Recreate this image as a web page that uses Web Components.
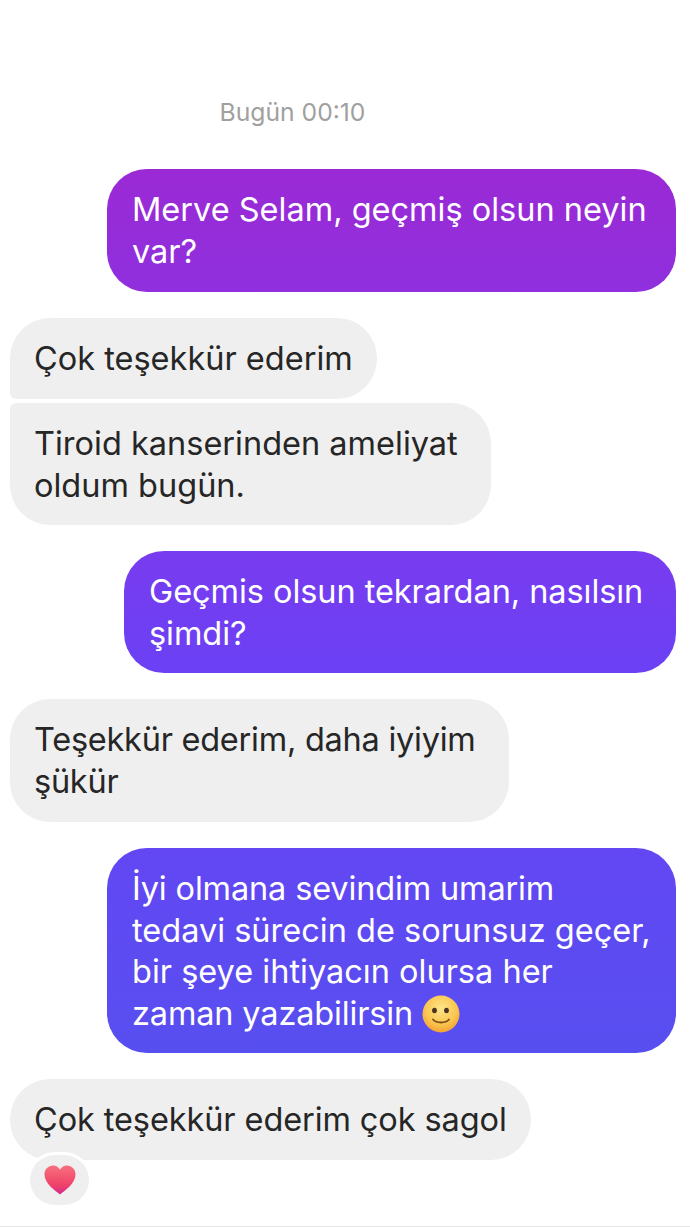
<!DOCTYPE html>
<html lang="tr">
  <head>
    <meta charset="UTF-8" />
    <title>Sohbet</title>
    <style>
      html, body { margin: 0; padding: 0; background: #fff; }
      body { width: 690px; height: 1227px; overflow: hidden; font-family: Inter, "Noto Sans", sans-serif; }
      .tight { letter-spacing: -0.15px; }
    </style>
  </head>
  <body>
    <chat-thread>
      <chat-time>Bugün 00:10</chat-time>
      <chat-bubble mine style="--w: 569px; margin-top: 41px">Merve Selam, geçmiş olsun neyin<br />var?</chat-bubble>
      <chat-bubble style="--w: 367px; --bl: 6px; margin-top: 26px">Çok teşekkür ederim</chat-bubble>
      <chat-bubble style="--w: 481px; --tl: 6px; --pb: 18px; margin-top: 4px">Tiroid kanserinden ameliyat<br />oldum bugün.</chat-bubble>
      <chat-bubble mine style="--w: 552px; --pb: 18px; --ls: -0.06px; margin-top: 26px">Geçmis olsun tekrardan, nasılsın<br />şimdi?</chat-bubble>
      <chat-bubble style="--w: 499px; --ls: -0.25px; margin-top: 26px">Teşekkür ederim, daha iyiyim<br />şükür</chat-bubble>
      <chat-bubble mine style="--w: 569px; --lh: 41.5px; margin-top: 26px"><span class="tight">İyi olmana sevindim umarim</span><br />tedavi sürecin de sorunsuz geçer,<br />bir şeye ihtiyacın olursa her<br /><span class="tight">zaman yazabilirsin</span> <smile-icon></smile-icon></chat-bubble>
      <chat-bubble style="--w: 521px; --ls: -0.1px; margin-top: 26px">Çok teşekkür ederim çok sagol<heart-reaction slot="reaction"></heart-reaction></chat-bubble>
    </chat-thread>

    <script>
      class ChatThread extends HTMLElement {
        constructor() {
          super();
          this.attachShadow({ mode: "open" }).innerHTML = `
            <style>
              :host { display: flex; flex-direction: column; box-sizing: border-box; height: 1227px; padding: 96px 14px 0 10px; border-bottom: 1px solid #e6e6e6; }
            </style>
            <slot></slot>`;
        }
      }

      class ChatTime extends HTMLElement {
        constructor() {
          super();
          this.attachShadow({ mode: "open" }).innerHTML = `
            <style>
              :host { display: block; padding-right: 101px; text-align: center; font-size: 24.7px; line-height: 32px; color: #a0a0a0; }
            </style>
            <slot></slot>`;
        }
      }

      class ChatBubble extends HTMLElement {
        constructor() {
          super();
          this.attachShadow({ mode: "open" }).innerHTML = `
            <style>
              :host { display: block; position: relative; box-sizing: border-box; width: var(--w); padding: 20px 10px var(--pb, 19px) 24px; font-size: 32.5px; line-height: var(--lh, 42px); letter-spacing: var(--ls, 0); white-space: nowrap; color: #262626; background: #efefef; border-radius: var(--tl, 40px) 40px 40px var(--bl, 40px); }
              :host([mine]) { align-self: flex-end; padding-left: 25px; color: #fff; background: linear-gradient(180deg, #a328ce 0px, #9a2ad5 170px, #7a3bef 540px, #6a41f5 680px, #6247f3 850px, #574ff0 1060px) fixed; }
            </style>
            <slot></slot><slot name="reaction"></slot>`;
        }
      }

      class SmileIcon extends HTMLElement {
        constructor() {
          super();
          this.attachShadow({ mode: "open" }).innerHTML = `
            <style>
              :host { display: inline-block; width: 38px; height: 38px; line-height: 0; vertical-align: -8px; }
              svg { display: block; }
            </style>
            <svg width="38" height="38" viewBox="0 0 38 38">
              <defs>
                <radialGradient id="face" cx="50%" cy="35%" r="70%">
                  <stop offset="0" stop-color="#fde58a" />
                  <stop offset="0.6" stop-color="#fbc64f" />
                  <stop offset="1" stop-color="#f09a2e" />
                </radialGradient>
              </defs>
              <circle cx="19" cy="19" r="18.5" fill="url(#face)" />
              <ellipse cx="12.5" cy="15.5" rx="2.4" ry="2.8" fill="#4a3320" />
              <ellipse cx="24.5" cy="15.5" rx="2.4" ry="2.8" fill="#4a3320" />
              <path d="M11 24.5 C14.5 28.5 23.5 28.5 27 24.5" fill="none" stroke="#7a4a1c" stroke-width="1.8" stroke-linecap="round" />
            </svg>`;
        }
      }

      class HeartReaction extends HTMLElement {
        constructor() {
          super();
          this.attachShadow({ mode: "open" }).innerHTML = `
            <style>
              :host { position: absolute; left: 20px; top: 76px; display: flex; align-items: center; justify-content: center; width: 59px; height: 50px; background: #efefef; border-radius: 25px; box-shadow: 0 0 0 3px #fff; }
              svg { display: block; }
            </style>
            <svg width="32" height="30" viewBox="0 0 32 30">
              <defs>
                <linearGradient id="heart" x1="0" y1="0" x2="0" y2="1">
                  <stop offset="0" stop-color="#f8707f" />
                  <stop offset="0.65" stop-color="#ef4468" />
                  <stop offset="1" stop-color="#d42a8e" />
                </linearGradient>
              </defs>
              <path d="M16 29.5 C11 25.5 0.5 18.5 0.5 9.5 C0.5 4 4.5 0.5 9 0.5 C12 0.5 14.6 2 16 4.8 C17.4 2 20 0.5 23 0.5 C27.5 0.5 31.5 4 31.5 9.5 C31.5 18.5 21 25.5 16 29.5 Z" fill="url(#heart)" />
            </svg>`;
        }
      }

      customElements.define("chat-thread", ChatThread);
      customElements.define("chat-time", ChatTime);
      customElements.define("chat-bubble", ChatBubble);
      customElements.define("smile-icon", SmileIcon);
      customElements.define("heart-reaction", HeartReaction);
    </script>
  </body>
</html>
